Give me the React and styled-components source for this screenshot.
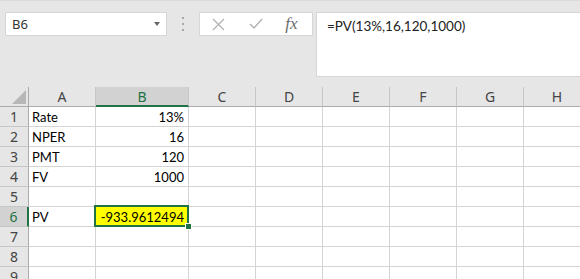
import styled, { createGlobalStyle, css } from "styled-components"

const GlobalStyle = createGlobalStyle`
  html, body { margin: 0; padding: 0; }
  body {
    background: #e6e6e6;
    width: 580px;
    height: 279px;
    overflow: hidden;
  }
`

const GREEN = "#217346"
const cols = ["A", "B", "C", "D", "E", "F", "G", "H"]
const widths = [67, 93, 67, 67, 67, 67, 67, 67]

const rows = [
    { a: "Rate", b: "13%" },
    { a: "NPER", b: "16" },
    { a: "PMT", b: "120" },
    { a: "FV", b: "1000" },
    { a: "", b: "" },
    { a: "PV", b: "-933.9612494", selected: true },
    { a: "", b: "" },
    { a: "", b: "" },
    { a: "", b: "" },
]

const Sheet = styled.div`
  width: 580px;
  height: 279px;
  overflow: hidden;
  display: flex;
  flex-direction: column;
  background: #e6e6e6;
`

const Toolbar = styled.div`
  height: 87px;
  flex: none;
  box-sizing: border-box;
  border-top: 1px solid #dadada;
  padding: 11px 0 0 5px;
  display: flex;
  align-items: flex-start;
`

const NameBox = styled.div`
  width: 162px;
  height: 24px;
  box-sizing: border-box;
  background: #fff;
  border: 1px solid #d6d6d6;
  display: flex;
  align-items: center;
  justify-content: space-between;
  padding: 0 6px 0 6px;
  font-family: "Noto Sans", sans-serif;
  font-size: 13px;
  color: #333;
`

const Caret = styled.span`
  width: 0;
  height: 0;
  border-left: 3.5px solid transparent;
  border-right: 3.5px solid transparent;
  border-top: 4px solid #666;
`

const Grip = styled.div`
  width: 32px;
  height: 24px;
  display: flex;
  flex-direction: column;
  align-items: center;
  justify-content: center;
  gap: 4px;
  span {
    width: 2px;
    height: 2px;
    background: #a6a6a6;
  }
`

const FxButtons = styled.div`
  width: 114px;
  height: 24px;
  box-sizing: border-box;
  background: #fff;
  border: 1px solid #d6d6d6;
  display: flex;
  align-items: center;
`

const FxButton = styled.div`
  width: 40px;
  height: 22px;
  display: flex;
  align-items: center;
  justify-content: center;
`

const FxLabel = styled.span`
  font-family: "Liberation Serif", serif;
  font-style: italic;
  font-size: 17px;
  color: #6b6b6b;
  margin-left: -4px;
`

const FormulaBar = styled.div`
  flex: 1;
  height: 65px;
  margin-left: 3px;
  box-sizing: border-box;
  background: #fff;
  border: 1px solid #d6d6d6;
  border-right: none;
  padding: 5px 0 0 10px;
  font-family: Lato, sans-serif;
  font-size: 13.5px;
  color: #222;
`

const Grid = styled.div`
  display: grid;
  grid-template-columns: 29px ${widths.map((w) => `${w}px`).join(" ")};
  grid-auto-rows: 20px;
  background: #fff;
`

const Corner = styled.div`
  background: #e6e6e6;
  box-sizing: border-box;
  border-right: 1px solid #ababab;
  border-bottom: 1px solid #ababab;
  position: relative;
  &::after {
    content: "";
    position: absolute;
    right: 2px;
    bottom: 2px;
    width: 0;
    height: 0;
    border-left: 14px solid transparent;
    border-bottom: 14px solid #b7b7b7;
  }
`

const ColHeader = styled.div`
  box-sizing: border-box;
  background: ${(p) => (p.$active ? "#d2d2d2" : "#e6e6e6")};
  border-right: 1px solid #c6c6c6;
  border-bottom: ${(p) => (p.$active ? `2px solid ${GREEN}` : "1px solid #ababab")};
  display: flex;
  align-items: center;
  justify-content: center;
  font-family: "Noto Sans", sans-serif;
  font-size: 14px;
  color: ${(p) => (p.$active ? GREEN : "#444")};
  padding-top: ${(p) => (p.$active ? "1px" : "0")};
`

const RowHeader = styled.div`
  box-sizing: border-box;
  background: ${(p) => (p.$active ? "#d2d2d2" : "#e6e6e6")};
  border-right: ${(p) => (p.$active ? `2px solid ${GREEN}` : "1px solid #ababab")};
  border-bottom: 1px solid #c6c6c6;
  display: flex;
  align-items: center;
  justify-content: center;
  font-family: "Noto Sans", sans-serif;
  font-size: 14px;
  color: ${(p) => (p.$active ? GREEN : "#444")};
`

const Cell = styled.div`
  box-sizing: border-box;
  border-right: 1px solid #d4d4d4;
  border-bottom: 1px solid #d4d4d4;
  display: flex;
  align-items: flex-end;
  justify-content: ${(p) => (p.$num ? "flex-end" : "flex-start")};
  padding: 0 4px 1px 3px;
  font-family: Lato, sans-serif;
  font-size: 13px;
  color: #000;
  white-space: nowrap;
  position: relative;
  ${(p) =>
        p.$selected &&
        css`
      background: #ffff00;
      &::before {
        content: "";
        position: absolute;
        left: -2px;
        top: -2px;
        right: -1px;
        bottom: -1px;
        border: 2px solid ${GREEN};
        pointer-events: none;
      }
      &::after {
        content: "";
        position: absolute;
        right: -4px;
        bottom: -4px;
        width: 5px;
        height: 5px;
        background: ${GREEN};
        border: 1px solid #fff;
        z-index: 2;
      }
    `}
`

const Row = ({ n, a, b, selected }) => (
    <>
        <RowHeader $active={selected}>{n}</RowHeader>
        <Cell>{a}</Cell>
        <Cell $num $selected={selected}>{b}</Cell>
        {cols.slice(2).map((c) => (
            <Cell key={c} />
        ))}
    </>
)

const App = () => {
    return (
        <Sheet>
            <GlobalStyle />
            <Toolbar>
                <NameBox>
                    B6
                    <Caret />
                </NameBox>
                <Grip>
                    <span />
                    <span />
                    <span />
                </Grip>
                <FxButtons>
                    <FxButton>
                        <svg width="13" height="13" viewBox="0 0 13 13">
                            <path d="M1 1 L12 12 M12 1 L1 12" stroke="#b0b0b0" strokeWidth="1.2" fill="none" />
                        </svg>
                    </FxButton>
                    <FxButton>
                        <svg width="14" height="12" viewBox="0 0 14 12">
                            <path d="M1 6 L5 10 L13 1" stroke="#b0b0b0" strokeWidth="1.4" fill="none" />
                        </svg>
                    </FxButton>
                    <FxButton>
                        <FxLabel>fx</FxLabel>
                    </FxButton>
                </FxButtons>
                <FormulaBar>=PV(13%,16,120,1000)</FormulaBar>
            </Toolbar>
            <Grid>
                <Corner />
                {cols.map((c) => (
                    <ColHeader key={c} $active={c === "B"}>
                        {c}
                    </ColHeader>
                ))}
                {rows.map((r, i) => (
                    <Row key={i} n={i + 1} {...r} />
                ))}
            </Grid>
        </Sheet>
    )
}

export default App
